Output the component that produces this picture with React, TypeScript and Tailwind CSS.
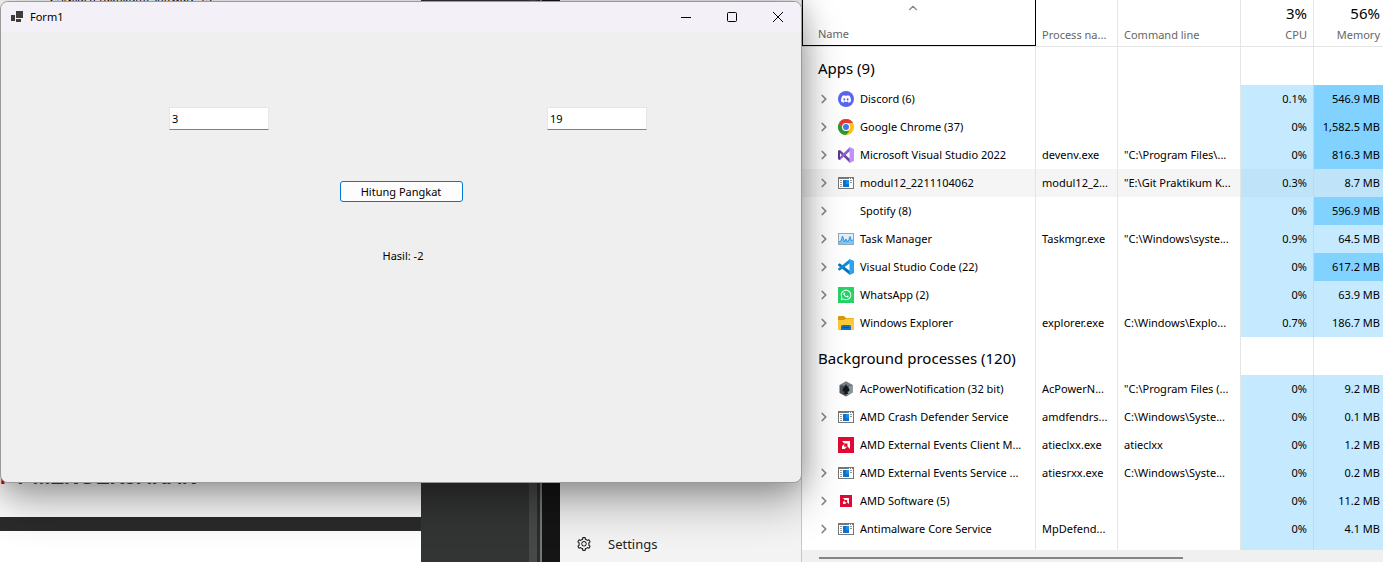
import { useState } from "react";
import type { ReactNode } from "react";
import { SiDiscord } from "react-icons/si";
import { FaWhatsapp } from "react-icons/fa";
import { AiOutlineSetting } from "react-icons/ai";
import { ChevronRight, ChevronUp } from "lucide-react";

type Process = {
  name: string;
  icon: ReactNode;
  expandable?: boolean;
  process?: string;
  command?: string;
  cpu: string;
  memory: string;
  heavy?: boolean;
  active?: boolean;
};

function DiscordIcon() {
  return (
    <span className="flex size-4 items-center justify-center rounded-full bg-[#5865f2] text-white">
      <SiDiscord size={10} />
    </span>
  );
}

function ChromeIcon() {
  return (
    <svg viewBox="0 0 48 48" className="size-4">
      <circle cx="24" cy="24" r="24" fill="#fbc116" />
      <path d="M24 12H44.8A24 24 0 0 0 3.2 12L13.6 30 24 24Z" fill="#e33b2e" />
      <path d="M3.2 12 13.6 30 24 36H34.4L24 48A24 24 0 0 1 3.2 12Z" fill="#249a41" />
      <circle cx="24" cy="24" r="12" fill="#fff" />
      <circle cx="24" cy="24" r="9" fill="#3b7ded" />
    </svg>
  );
}

function VisualStudioIcon() {
  return (
    <svg viewBox="0 0 16 16" className="size-4">
      <path d="M0 4 2 3 12 12V16L1.9 6V10L0 12Z" fill="#6b44a8" />
      <path d="M0 12 2 13 12 4V0L1.9 10 0 11Z" fill="#8a5fcb" />
      <path d="M0 4 2 3V13L0 12Z" fill="#5b3795" />
      <path d="M11.5 0 16 2V14L11.5 16Z" fill="#c191f7" />
    </svg>
  );
}

function ProgramIcon() {
  return (
    <svg viewBox="0 0 16 12" className="h-3 w-4" shapeRendering="crispEdges">
      <rect width="16" height="12" fill="#777" />
      <rect x="1" y="2" width="14" height="9" fill="#fff" />
      <path d="M11 1h1v1h-1zM13 1h1v1h-1z" fill="#fff" />
      <rect x="5" y="3" width="6" height="7" fill="#0a72c8" />
      <rect x="8" y="3" width="3" height="4" fill="#1e8de6" />
      <path d="M2 3h2v1H2zM2 5h2v1H2zM2 7h2v1H2zM2 9h2v1H2zM12 3h2v1h-2zM12 5h2v1h-2z" fill="#999" />
    </svg>
  );
}

function TaskManagerIcon() {
  return (
    <svg viewBox="0 0 16 12" className="h-3 w-4">
      <rect x=".5" y=".5" width="15" height="11" fill="#e3eff8" stroke="#9aa9b6" />
      <path d="M1 9 3 8 4.5 3 6.5 9 8 6 9 8.5 10.5 8 12 3.5 13.5 8 15 6.5V11H1Z" fill="#7cc8fa" />
      <path d="M1 9 3 8 4.5 3 6.5 9 8 6 9 8.5 10.5 8 12 3.5 13.5 8 15 6.5" fill="none" stroke="#1383d8" strokeWidth=".8" />
    </svg>
  );
}

function CodeIcon() {
  return (
    <svg viewBox="0 0 16 16" className="size-4">
      <path d="M0 5.6 1.6 4.2 12 12V16L.1 6.4Z" fill="#0b72bd" />
      <path d="M0 10.4 1.6 11.8 12 4V0L.1 9.6Z" fill="#128bd8" />
      <path d="M11.5 0 16 1.9V14.1L11.5 16Z" fill="#2ba4ee" />
    </svg>
  );
}

function WhatsAppIcon() {
  return (
    <span className="flex size-4 items-center justify-center bg-[#25d366] text-white">
      <FaWhatsapp size={12} />
    </span>
  );
}

function FolderIcon() {
  return (
    <svg viewBox="0 0 16 14" className="h-[14px] w-4">
      <path d="M0 1Q0 0 1 0H6L8 2H15Q16 2 16 3V6H0Z" fill="#d99a0b" />
      <path d="M0 4H6L8 2.4H15Q16 2.4 16 3.4V14H0Z" fill="#fdc937" />
      <path d="M3 14V10.5Q3 9 4.5 9H11.5Q13 9 13 10.5V14Z" fill="#1173c5" />
      <rect x="5" y="11" width="6" height="1" fill="#0b4f8f" />
    </svg>
  );
}

function PowerIcon() {
  return (
    <svg viewBox="0 0 16 16" className="size-4">
      <path d="M8 .5 14.5 4V11.5L8 15.5 1.5 12V4.2Z" fill="#4b525a" />
      <path d="M8 .5 14.5 4 8 5 1.5 4.2Z" fill="#767f88" />
      <path d="M11 5 14.5 4V11.5L8 15.5 9 12Z" fill="#8b939b" />
      <path d="M8 3Q8.6 5 11 7.5 12.4 10.5 9.4 10.8L10.2 13H5.8L6.6 10.8Q3.6 10.5 5 7.5 7.4 5 8 3Z" fill="#14181d" />
    </svg>
  );
}

function AmdIcon({ small = false }: { small?: boolean }) {
  return (
    <svg viewBox="0 0 16 16" className={small ? "mx-[2px] size-3" : "size-4"}>
      <rect width="16" height="16" fill="#e00b35" />
      <path d="M4 4H12V12L9.5 9.6V6.5H6.4Z" fill="#fff" />
      <path d="M6.2 7 4 9.2V12H6.8L9 9.8H6.2Z" fill="#fff" />
    </svg>
  );
}

const apps: Process[] = [
  { name: "Discord (6)", icon: <DiscordIcon />, expandable: true, cpu: "0.1%", memory: "546.9 MB", heavy: true },
  { name: "Google Chrome (37)", icon: <ChromeIcon />, expandable: true, cpu: "0%", memory: "1,582.5 MB", heavy: true },
  { name: "Microsoft Visual Studio 2022", icon: <VisualStudioIcon />, expandable: true, process: "devenv.exe", command: '"C:\\Program Files\\...', cpu: "0%", memory: "816.3 MB", heavy: true },
  { name: "modul12_2211104062", icon: <ProgramIcon />, expandable: true, process: "modul12_2...", command: '"E:\\Git Praktikum K...', cpu: "0.3%", memory: "8.7 MB", active: true },
  { name: "Spotify (8)", icon: null, expandable: true, cpu: "0%", memory: "596.9 MB", heavy: true },
  { name: "Task Manager", icon: <TaskManagerIcon />, expandable: true, process: "Taskmgr.exe", command: '"C:\\Windows\\syste...', cpu: "0.9%", memory: "64.5 MB" },
  { name: "Visual Studio Code (22)", icon: <CodeIcon />, expandable: true, cpu: "0%", memory: "617.2 MB", heavy: true },
  { name: "WhatsApp (2)", icon: <WhatsAppIcon />, expandable: true, cpu: "0%", memory: "63.9 MB" },
  { name: "Windows Explorer", icon: <FolderIcon />, expandable: true, process: "explorer.exe", command: "C:\\Windows\\Explo...", cpu: "0.7%", memory: "186.7 MB" },
];

const background: Process[] = [
  { name: "AcPowerNotification (32 bit)", icon: <PowerIcon />, process: "AcPowerN...", command: '"C:\\Program Files (...', cpu: "0%", memory: "9.2 MB" },
  { name: "AMD Crash Defender Service", icon: <ProgramIcon />, expandable: true, process: "amdfendrs...", command: "C:\\Windows\\Syste...", cpu: "0%", memory: "0.1 MB" },
  { name: "AMD External Events Client M...", icon: <AmdIcon />, process: "atieclxx.exe", command: "atieclxx", cpu: "0%", memory: "1.2 MB" },
  { name: "AMD External Events Service ...", icon: <ProgramIcon />, expandable: true, process: "atiesrxx.exe", command: "C:\\Windows\\Syste...", cpu: "0%", memory: "0.2 MB" },
  { name: "AMD Software (5)", icon: <AmdIcon small />, expandable: true, cpu: "0%", memory: "11.2 MB" },
  { name: "Antimalware Core Service", icon: <ProgramIcon />, expandable: true, process: "MpDefend...", cpu: "0%", memory: "4.1 MB" },
];

function GroupRow({ title }: { title: string }) {
  return (
    <tr className="h-[38px]">
      <th scope="rowgroup" className="border-r border-[#e5e5e5] pt-1 pl-4 text-left text-[15px] font-normal">{title}</th>
      <td className="border-r border-[#e5e5e5]" />
      <td className="border-r border-[#e5e5e5]" />
      <td className="border-r border-[#e5e5e5]" />
      <td />
    </tr>
  );
}

function ProcessRow({ item }: { item: Process }) {
  const light = item.active ? "bg-[#bfe4f9]" : "bg-[#c5eaff]";
  return (
    <tr className={item.active ? "h-7 bg-[#f5f5f5]" : "h-7"}>
      <td className="border-r border-[#e5e5e5]">
        <div className="flex items-center pl-[15px]">
          <span className="flex w-[21px] shrink-0">
            {item.expandable && (
              <button type="button" aria-label={`Expand ${item.name}`} className="text-[#858585]">
                <ChevronRight size={14} strokeWidth={3} />
              </button>
            )}
          </span>
          <span className="flex w-[22px] shrink-0 items-center">{item.icon}</span>
          <span className="whitespace-nowrap">{item.name}</span>
        </div>
      </td>
      <td className="border-r border-[#e5e5e5] pl-[6px] whitespace-nowrap">{item.process}</td>
      <td className="border-r border-[#e5e5e5] pl-[6px] whitespace-nowrap">{item.command}</td>
      <td className={`border-r border-[#b9dcef] pr-[6px] text-right ${light}`}>{item.cpu}</td>
      <td className={`pr-[3px] text-right whitespace-nowrap ${item.heavy ? "bg-[#82d2ff]" : light}`}>{item.memory}</td>
    </tr>
  );
}

function TaskManager() {
  return (
    <section aria-label="Processes" className="flex w-[581px] shrink-0 flex-col overflow-hidden bg-white">
      <table className="w-full table-fixed border-separate border-spacing-0">
        <thead className="text-[#666]">
          <tr className="h-[47px]">
            <th scope="col" className="w-[234px] border-b border-[#e5e5e5] p-0 font-normal">
              <button type="button" className="flex h-[46px] w-full flex-col items-center justify-between border-x border-b border-black pt-px pb-[3px]">
                <ChevronUp size={14} strokeWidth={2} className="mr-3 text-[#888]" />
                <span className="self-start pl-[15px]">Name</span>
              </button>
            </th>
            <th scope="col" className="w-[82px] border-r border-b border-[#e5e5e5] pb-[3px] pl-[6px] text-left align-bottom font-normal whitespace-nowrap">Process na...</th>
            <th scope="col" className="w-[123px] border-r border-b border-[#e5e5e5] pb-[3px] pl-[6px] text-left align-bottom font-normal">Command line</th>
            <th scope="col" className="w-[73px] border-r border-b border-[#e5e5e5] pr-[6px] pb-[3px] text-right align-bottom font-normal">
              <span className="mb-[2px] block text-[15px] leading-6 text-black">3%</span>CPU
            </th>
            <th scope="col" className="border-b border-[#e5e5e5] pr-[3px] pb-[3px] text-right align-bottom font-normal">
              <span className="mb-[2px] block text-[15px] leading-6 text-black">56%</span>Memory
            </th>
          </tr>
        </thead>
        <tbody>
          <GroupRow title="Apps (9)" />
          {apps.map((item) => <ProcessRow key={item.name} item={item} />)}
          <GroupRow title="Background processes (120)" />
          {background.map((item) => <ProcessRow key={item.name} item={item} />)}
          <tr className="h-[7px]">
            <td className="border-r border-[#e5e5e5]" />
            <td className="border-r border-[#e5e5e5]" />
            <td className="border-r border-[#e5e5e5]" />
            <td className="border-r border-[#b9dcef] bg-[#c5eaff]" />
            <td className="bg-[#c5eaff]" />
          </tr>
        </tbody>
      </table>
      <div className="flex-1 bg-[#f0f0f0] pt-[7px] pl-[17px]">
        <div className="h-[2px] w-[364px] bg-[#858585]" />
      </div>
    </section>
  );
}

function Backdrop() {
  return (
    <div className="flex h-full">
      <div className="flex flex-1 flex-col bg-[#2b2b2b]">
        <div className="flex h-[517px] flex-col justify-between bg-white">
          <span className="-mt-[10px] pl-[45px] leading-4">"C:\Nilai (Praktikum) software 13"</span>
          <span className="pb-7 font-['Liberation_Sans',sans-serif] text-[21px] leading-6 font-bold text-[#d90000]">PT MENGERJAKAN</span>
        </div>
        <div className="mt-[14px] flex-1 bg-white" />
      </div>
      <div className="flex w-[139px] bg-[#333434]">
        <div className="ml-auto w-2 bg-[#474949]" />
        <div className="w-[3px] bg-[#2c2c2c]" />
        <div className="w-[2px] bg-[#777]" />
        <div className="w-[18px] bg-[#151515]" />
      </div>
      <aside className="flex w-[242px] flex-col justify-end border-r border-[#c8c8c8] bg-[#f3f3f3] pb-2">
        <a href="#settings" className="flex items-center gap-4 pl-4 text-[13px] leading-5 text-[#222]">
          <AiOutlineSetting size={16} />
          Settings
        </a>
      </aside>
    </div>
  );
}

function NumberField({ label, value, onChange }: { label: string; value: string; onChange: (value: string) => void }) {
  return (
    <input
      aria-label={label}
      value={value}
      onChange={(event) => onChange(event.target.value)}
      className="h-[23px] w-[100px] border border-[#e6e6e6] border-b-[#808080] bg-white pl-[2px] outline-none"
    />
  );
}

function FormWindow() {
  const [first, setFirst] = useState("3");
  const [second, setSecond] = useState("19");
  const [result, setResult] = useState("-2");
  return (
    <main className="absolute inset-x-0 top-px z-10 overflow-hidden rounded-lg border border-[#9a9a9a] bg-[#efefef] shadow-[0_20px_44px_rgba(0,0,0,0.32),0_0_28px_rgba(0,0,0,0.24)]">
      <header className="flex h-[30px] items-center bg-[#f3f0f8] pl-[10px]">
        <svg viewBox="0 0 12 12" className="size-3" fill="#3d3d3d">
          <path d="M0 4H4V10H0ZM5 0H12V7H5ZM5 8H10V11H5Z" />
        </svg>
        <h1 className="pl-[7px]">Form1</h1>
        <div className="ml-auto flex h-full">
          <button type="button" aria-label="Minimize" className="flex w-[46px] items-center justify-center">
            <svg viewBox="0 0 10 10" className="size-[10px]" stroke="#000"><path d="M0 5.5H10" /></svg>
          </button>
          <button type="button" aria-label="Maximize" className="flex w-[46px] items-center justify-center">
            <svg viewBox="0 0 10 10" className="size-[10px]" fill="none" stroke="#000"><rect x=".5" y=".5" width="9" height="9" rx="1" /></svg>
          </button>
          <button type="button" aria-label="Close" className="flex w-[46px] items-center justify-center">
            <svg viewBox="0 0 10 10" className="size-[10px]" stroke="#000"><path d="M0 0 10 10M10 0 0 10" /></svg>
          </button>
        </div>
      </header>
      <form
        className="flex flex-col items-center pt-[75px] pb-[218px]"
        onSubmit={(event) => {
          event.preventDefault();
          setResult(String(Math.pow(Number(first), Number(second))));
        }}
      >
        <div className="flex gap-[278px] pl-[14px]">
          <NumberField label="Angka pertama" value={first} onChange={setFirst} />
          <NumberField label="Angka kedua" value={second} onChange={setSecond} />
        </div>
        <button type="submit" className="mt-[51px] h-[21px] w-[123px] rounded-[3px] border border-[#0078d4] bg-[#fdfdfd]">
          Hitung Pangkat
        </button>
        <output className="mt-[46px] pl-1 leading-4">Hasil: {result}</output>
      </form>
    </main>
  );
}

export default function App() {
  return (
    <div className="flex h-screen overflow-hidden bg-white font-['Noto_Sans',sans-serif] text-[11px] leading-4 text-black">
      <div className="relative z-10 min-w-0 flex-1">
        <Backdrop />
        <FormWindow />
      </div>
      <TaskManager />
    </div>
  );
}
